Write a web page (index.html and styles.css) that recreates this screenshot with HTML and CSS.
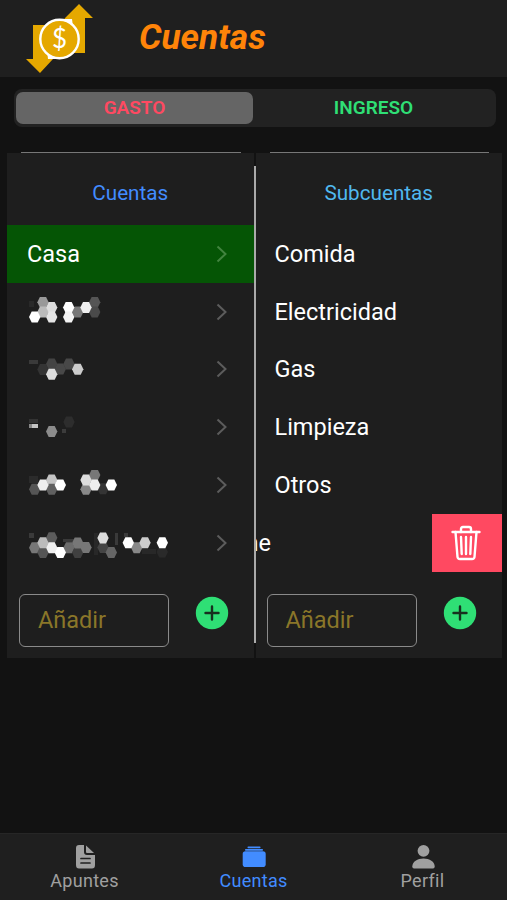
FILE: index.html
```html
<!DOCTYPE html>
<html lang="es">
<head>
  <meta charset="UTF-8">
  <meta name="viewport" content="width=device-width, initial-scale=1.0">
  <title>Cuentas</title>
  <link rel="stylesheet" href="styles.css">
</head>
<body>
  <svg class="defs" width="0" height="0">
    <defs>
      <path id="hex" d="M-5.700 0L-3 -5.500H3L5.700 0L3 5.500H-3Z"/>
    </defs>
    <symbol id="chevron" viewBox="0 0 12 18">
      <path d="M1.500 1.500L9.500 9L1.500 16.500" fill="none" stroke="currentColor" stroke-width="2"/>
    </symbol>
    <symbol id="plus" viewBox="0 0 34 34">
      <circle cx="17" cy="17" r="16.200" fill="#2fdf75"/>
      <path d="M17 10.500V23.500M10.500 17H23.500" stroke="#17301f" stroke-width="2.400" stroke-linecap="round"/>
    </symbol>
  </svg>

  <header class="header">
    <svg class="logo" width="70" height="72" viewBox="0 0 70 72">
      <path d="M54 1L68 15H60V50H30V30L40 15Z" fill="#e5a800"/>
      <path d="M8 22H34L38 50L28 56L15 70L1 56H8Z" fill="#e5a800"/>
      <path d="M38 16H47L48 24ZM22 47L23 56H33Z" fill="#fff"/>
      <circle cx="34.500" cy="36" r="19.200" fill="#e5a800" stroke="#fff" stroke-width="2.400"/>
      <text class="logo-sign" x="34.500" y="45" text-anchor="middle">$</text>
    </svg>
    <h1>Cuentas</h1>
  </header>

  <div class="segment">
    <button class="segment-button expense active">GASTO</button>
    <button class="segment-button income">INGRESO</button>
  </div>

  <main class="columns">
    <section class="column accounts">
      <h2>Cuentas</h2>
      <div class="item selected"><span>Casa</span><svg class="chevron"><use href="#chevron"/></svg></div>
      <div class="item">
        <svg class="masked" viewBox="0 0 150 30">
          <path d="M2 4h5v6h-5z" fill="#292929"/>
          <use href="#hex" x="16" y="5.3" fill="#999"/>
          <use href="#hex" x="16" y="15" fill="#bbb"/>
          <use href="#hex" x="24.7" y="10.6" fill="#ddd"/>
          <use href="#hex" x="7.7" y="20" fill="#fff"/>
          <use href="#hex" x="24.7" y="20" fill="#e5e5e5"/>
          <use href="#hex" x="50.7" y="15" fill="#777"/>
          <use href="#hex" x="41.7" y="10.6" fill="#fff"/>
          <use href="#hex" x="41.7" y="20" fill="#f4f4f4"/>
          <use href="#hex" x="67.7" y="5.3" fill="#555"/>
          <use href="#hex" x="67.7" y="15" fill="#4a4a4a"/>
          <use href="#hex" x="59" y="10.6" fill="#eee"/>
        </svg>
        <svg class="chevron"><use href="#chevron"/></svg>
      </div>
      <div class="item">
        <svg class="masked" viewBox="0 0 150 30">
          <path d="M2 6h9v4h-9z" fill="#3a3a3a"/>
          <use href="#hex" x="16" y="15.5" fill="#343434"/>
          <use href="#hex" x="24.7" y="10" fill="#444"/>
          <use href="#hex" x="33.3" y="15" fill="#484848"/>
          <use href="#hex" x="42" y="10" fill="#484848"/>
          <use href="#hex" x="50.7" y="15.2" fill="#ccc"/>
          <use href="#hex" x="24.7" y="20.2" fill="#ddd"/>
        </svg>
        <svg class="chevron"><use href="#chevron"/></svg>
      </div>
      <div class="item">
        <svg class="masked" viewBox="0 0 150 30">
          <path d="M2 7h9v4h-9z" fill="#333"/>
          <path d="M2 12h3v4h-3z" fill="#888"/>
          <path d="M5 12h6v4h-6z" fill="#c4c4c4"/>
          <path d="M35 17h4v4h-4z" fill="#3c3c3c"/>
          <use href="#hex" x="24.7" y="19.4" fill="#8c8c8c"/>
          <use href="#hex" x="42" y="10" fill="#2d2d2d"/>
        </svg>
        <svg class="chevron"><use href="#chevron"/></svg>
      </div>
      <div class="item">
        <svg class="masked" viewBox="0 0 150 30">
          <path d="M2 6h9v7h-9z" fill="#2b2b2b"/>
          <use href="#hex" x="7.7" y="19.2" fill="#555"/>
          <use href="#hex" x="24.7" y="10" fill="#c4c4c4"/>
          <use href="#hex" x="24.7" y="19.2" fill="#606060"/>
          <use href="#hex" x="16" y="15" fill="#eee"/>
          <use href="#hex" x="33.3" y="15" fill="#fff"/>
          <use href="#hex" x="67.7" y="5" fill="#777"/>
          <use href="#hex" x="59" y="19.2" fill="#888"/>
          <use href="#hex" x="76" y="18.8" fill="#343434"/>
          <use href="#hex" x="59" y="10" fill="#ddd"/>
          <use href="#hex" x="67.7" y="15" fill="#eee"/>
          <use href="#hex" x="84.3" y="15" fill="#fff"/>
        </svg>
        <svg class="chevron"><use href="#chevron"/></svg>
      </div>
      <div class="item">
        <svg class="masked" viewBox="0 0 150 30">
          <path d="M2 5h5v5h-5zM36 11h14v3h-14zM88 5h3v12h-3zM97 5h4v4h-4z" fill="#3a3a3a"/>
          <path d="M67 5h4v22h-4zM115 21h14v5h-14z" fill="#282828"/>
          <use href="#hex" x="7.7" y="19.8" fill="#777"/>
          <use href="#hex" x="24.7" y="9.8" fill="#5c5c5c"/>
          <use href="#hex" x="16" y="24.4" fill="#555"/>
          <use href="#hex" x="16" y="14.8" fill="#bbb"/>
          <use href="#hex" x="24.7" y="19.8" fill="#eee"/>
          <use href="#hex" x="42" y="19.8" fill="#6c6c6c"/>
          <use href="#hex" x="33.3" y="24.4" fill="#fff"/>
          <use href="#hex" x="50.7" y="24.4" fill="#404040"/>
          <use href="#hex" x="59" y="19.4" fill="#777"/>
          <use href="#hex" x="50.7" y="15" fill="#777"/>
          <use href="#hex" x="76" y="19.6" fill="#444"/>
          <use href="#hex" x="76" y="10" fill="#ddd"/>
          <use href="#hex" x="84.3" y="24.4" fill="#666"/>
          <use href="#hex" x="109.7" y="19.8" fill="#888"/>
          <use href="#hex" x="101.3" y="14.8" fill="#fff"/>
          <use href="#hex" x="118" y="14.8" fill="#ccc"/>
          <use href="#hex" x="135.3" y="24" fill="#2a2a2a"/>
          <use href="#hex" x="135.3" y="14.8" fill="#fff"/>
        </svg>
        <svg class="chevron"><use href="#chevron"/></svg>
      </div>
      <div class="add-row">
        <input type="text" placeholder="Añadir">
        <svg class="add-icon"><use href="#plus"/></svg>
      </div>
    </section>

    <div class="divider"></div>

    <section class="column subaccounts">
      <h2>Subcuentas</h2>
      <div class="item"><span>Comida</span></div>
      <div class="item"><span>Electricidad</span></div>
      <div class="item"><span>Gas</span></div>
      <div class="item"><span>Limpieza</span></div>
      <div class="item"><span>Otros</span></div>
      <div class="item sliding">
        <span>ne</span>
        <button class="delete">
          <svg width="32" height="36" viewBox="0 0 32 36" fill="none" stroke="#fff" stroke-width="2.4" stroke-linecap="round" stroke-linejoin="round">
            <path d="M4.500 7L6.500 32Q6.700 34 9 34H21Q23.300 34 23.500 32L25.500 7"/>
            <path d="M1.500 7H28.500"/>
            <path d="M10 7V4Q10 2 12 2H18Q20 2 20 4V7"/>
            <path d="M15 12V29M10 12L10.700 29M20 12L19.300 29"/>
          </svg>
        </button>
      </div>
      <div class="add-row">
        <input type="text" placeholder="Añadir">
        <svg class="add-icon"><use href="#plus"/></svg>
      </div>
    </section>
  </main>

  <nav class="tabs">
    <a class="tab">
      <svg width="26" height="26" viewBox="0 0 26 26">
        <path d="M7 1H12V8Q12 11 15 11H23V21Q23 24.500 20 24.500H7Q4 24.500 4 21V4Q4 1 7 1Z" fill="#a0a0a0"/>
        <path d="M14 1.500L22 9H15Q14 9 14 8Z" fill="#a0a0a0"/>
        <path d="M9 14.500H18M9 19H18" stroke="#1f1f1f" stroke-width="1.700" stroke-linecap="round"/>
      </svg>
      <span>Apuntes</span>
    </a>
    <a class="tab active">
      <svg width="26" height="26" viewBox="0 0 26 26" fill="#428cff">
        <rect x="1.700" y="7.300" width="23" height="15.800" rx="2.800"/>
        <rect x="4" y="5" width="18" height="1.700" rx=".8"/>
        <rect x="6.500" y="2.500" width="13" height="1.700" rx=".7"/>
      </svg>
      <span>Cuentas</span>
    </a>
    <a class="tab">
      <svg width="26" height="26" viewBox="0 0 26 26" fill="#a0a0a0">
        <circle cx="13.500" cy="6.800" r="5.900"/>
        <path d="M2.300 22.500C2.300 17.500 7.500 14.500 13.500 14.500S24.700 17.500 24.700 22.500Q24.700 24.500 23 24.500H4Q2.300 24.500 2.300 22.500Z"/>
      </svg>
      <span>Perfil</span>
    </a>
  </nav>
</body>
</html>
```
FILE: styles.css
```css
* {
  box-sizing: border-box;
}

body {
  font-family: Roboto, sans-serif;
  margin: 0;
  height: 900px;
  display: flex;
  flex-direction: column;
  overflow: hidden;
  color: #fff;
  background: #121212;
}

.defs {
  position: absolute;
}

.header {
  height: 77px;
  flex: none;
  display: flex;
  align-items: center;
  padding-left: 25px;
  gap: 44px;
  background: #1f1f1f;
}

.logo-sign {
  font-family: Lato, sans-serif;
  font-size: 26px;
  fill: #fff;
}

h1 {
  margin: 0;
  padding-bottom: 4px;
  color: #ff8409;
  font-size: 35.300px;
  font-style: italic;
  font-weight: bold;
}

.segment {
  display: flex;
  flex: none;
  height: 38px;
  margin: 12px 11px 0 14px;
  padding: 3px 2px;
  border-radius: 8px;
  background: #222;
}

.segment-button {
  flex: 1;
  padding: 0 0 1px;
  border: none;
  border-radius: 7px;
  background: transparent;
  font-family: inherit;
  font-size: 19px;
  font-weight: 600;
}

.segment-button.active {
  flex: none;
  width: 237px;
  background: #656565;
}

.expense {
  color: #ff4961;
}

.income {
  color: #2fdf75;
}

.columns {
  display: flex;
  flex: none;
  height: 506px;
  margin: 25px 5px 0 7px;
}

.column {
  width: 247px;
  border-top: 1px solid #121212;
  background: #1e1e1e;
}

/* thin rule above each list */
.column::before {
  content: "";
  display: block;
  height: 1px;
  margin: -1px 13px 0 14px;
  background: #777;
}

.divider {
  width: 2px;
  margin: 14px 0 15px;
  background: #aaa;
}

h2 {
  margin: 0;
  height: 72px;
  padding-top: 5px;
  line-height: 70px;
  text-align: center;
  font-size: 20.700px;
  font-weight: normal;
  color: #428cff;
}

.subaccounts h2 {
  color: #50b8ef;
}

.item {
  height: 57.800px;
  display: flex;
  align-items: center;
  justify-content: space-between;
  padding: 0 26px 0 20px;
  font-size: 23.500px;
}

.subaccounts .item {
  padding-left: 19px;
}

.item.selected {
  background: #055505;
}

.masked {
  width: 150px;
  height: 30px;
}

.chevron {
  width: 12px;
  height: 18px;
  color: #5c5c5c;
}

.selected .chevron {
  color: #42843f;
}

.subaccounts .item.sliding {
  padding: 0;
  overflow: hidden;
}

.sliding span {
  margin-left: -10px;
}

.delete {
  width: 70px;
  height: 100%;
  padding: 0;
  border: none;
  background: #ff4961;
}

.delete svg {
  display: block;
  margin: auto;
}

.add-row {
  display: flex;
  justify-content: space-between;
  padding: 22px 25px 0 12px;
}

.subaccounts .add-row {
  padding-left: 11px;
}

input {
  width: 150px;
  height: 53px;
  padding: 0 18px;
  border: 1px solid #8a8a8a;
  border-radius: 6px;
  background: transparent;
  color: #fff;
  font-family: inherit;
  font-size: 23.500px;
}

input::placeholder {
  color: #8a7629;
}

.add-icon {
  width: 34px;
  height: 34px;
  margin-top: 2px;
}

.tabs {
  display: flex;
  height: 67px;
  margin-top: auto;
  border-top: 1px solid #262626;
  background: #1f1f1f;
}

.tab {
  flex: 1;
  display: flex;
  flex-direction: column;
  align-items: center;
  padding-top: 10px;
  color: #a0a0a0;
  font-size: 18px;
  letter-spacing: 0.300px;
}

.tab span {
  line-height: 22px;
}

.tab.active {
  color: #428cff;
}
```
